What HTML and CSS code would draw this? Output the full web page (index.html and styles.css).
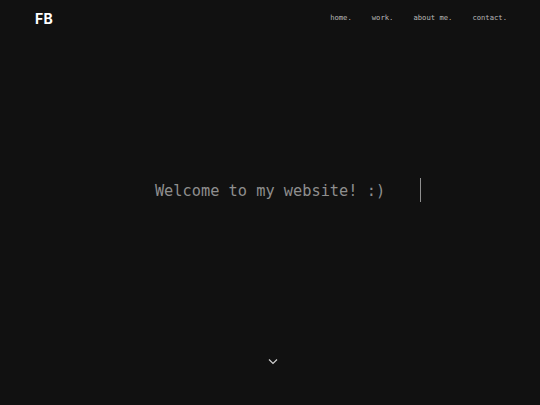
FILE: index.html
```html
<!DOCTYPE html>
<html lang="en">
<head>
<meta charset="utf-8">
<title>FB</title>
<link rel="stylesheet" href="styles.css">
</head>
<body>
<header class="topbar">
  <div class="logo">FB</div>
  <nav class="nav">
    <a class="nav-link" href="#">home.</a>
    <a class="nav-link" href="#">work.</a>
    <a class="nav-link" href="#">about me.</a>
    <a class="nav-link" href="#">contact.</a>
  </nav>
</header>
<main class="hero">
  <h1 class="typed">Welcome to my website! :)<span class="cursor"></span></h1>
  <div class="scroll">
    <svg width="10" height="7" viewBox="0 0 10 7"><polyline points="1,1.5 5,5.5 9,1.5" fill="none" stroke="#d0d0d0" stroke-width="1.2"/></svg>
  </div>
</main>
</body>
</html>
```

FILE: styles.css
```css
* { box-sizing: border-box; }
html, body { margin: 0; padding: 0; }
body {
  background: #111111;
  width: 540px;
  height: 405px;
  overflow: hidden;
  position: relative;
  font-family: "DejaVu Sans Mono", "Liberation Mono", monospace;
}
.topbar {
  position: absolute;
  top: 0; left: 0; right: 0;
  height: 35px;
  display: flex;
  align-items: center;
  justify-content: space-between;
  padding: 0 33px 0 35px;
  z-index: 2;
}
.logo {
  font-family: "Inter", "Roboto", sans-serif;
  font-weight: 700;
  font-size: 14px;
  color: #ffffff;
  letter-spacing: 0.2px;
  margin-top: 1px;
}
.nav {
  display: flex;
  gap: 20px;
}
.nav-link {
  font-size: 7.2px;
  color: #b8b8b8;
  text-decoration: none;
}
.hero {
  height: 405px;
  display: flex;
  align-items: center;
  justify-content: center;
  position: relative;
}
.typed {
  margin: 0;
  position: relative;
  font-weight: 400;
  font-size: 15.3px;
  color: #8e8e8e;
  margin-top: -23px;
  letter-spacing: 0;
}
.cursor {
  position: absolute;
  left: calc(100% + 35px);
  top: -4px;
  width: 1px;
  height: 24px;
  background: #909090;
}
.scroll {
  position: absolute;
  left: 0; right: 0;
  bottom: 40px;
  display: flex;
  justify-content: center;
  padding-left: 5px;
}
.scroll svg { display: block; }
```
